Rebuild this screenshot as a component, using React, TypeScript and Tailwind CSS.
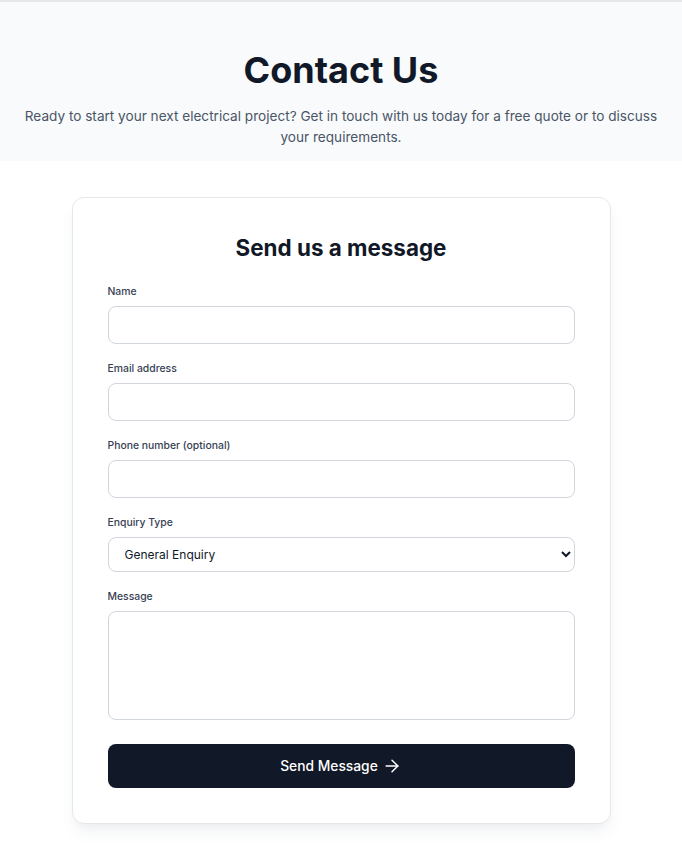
import React from 'react';
import { ArrowRight } from 'lucide-react';

const fields = [
  { id: 'name', label: 'Name', type: 'text' },
  { id: 'email', label: 'Email address', type: 'email' },
  { id: 'phone', label: 'Phone number (optional)', type: 'tel' },
];

const App: React.FC = () => {
  return (
    <div className="min-h-screen bg-white font-['Inter','Liberation_Sans',sans-serif] text-gray-900">
      <div className="border-t-2 border-gray-200 bg-[#f8fafc] px-4 pt-[48px] pb-[13px] text-center">
        <h1 className="text-4xl font-bold text-[#111827]">Contact Us</h1>
        <p className="mt-4 text-[13.6px] leading-[21px] text-gray-600">
          Ready to start your next electrical project? Get in touch with us today for a free quote or to discuss
          your requirements.
        </p>
      </div>

      <div className="px-4 pt-[36px] pb-10">
        <div className="mx-auto max-w-[539px] rounded-xl border border-gray-200 bg-white p-[35px] shadow-lg shadow-gray-200/60">
          <h2 className="mb-[21px] text-center text-[22.4px] leading-[30px] font-bold text-[#111827]">
            Send us a message
          </h2>
          <form className="flex flex-col gap-[17px]" onSubmit={(e) => e.preventDefault()}>
            {fields.map((f) => (
              <div key={f.id}>
                <label htmlFor={f.id} className="mb-1.5 block text-[10.4px] leading-4 font-medium text-gray-700">
                  {f.label}
                </label>
                <input
                  id={f.id}
                  type={f.type}
                  className="block h-[38px] w-full rounded-lg border border-gray-300 px-4 text-xs"
                />
              </div>
            ))}
            <div>
              <label htmlFor="type" className="mb-1.5 block text-[10.4px] leading-4 font-medium text-gray-700">
                Enquiry Type
              </label>
              <select
                id="type"
                className="block h-[35px] w-full rounded-lg border border-gray-300 bg-white pl-3 pr-2 text-xs text-gray-900"
              >
                <option>General Enquiry</option>
                <option>Quote Request</option>
                <option>Emergency</option>
              </select>
            </div>
            <div>
              <label htmlFor="message" className="mb-1.5 block text-[10.4px] leading-4 font-medium text-gray-700">
                Message
              </label>
              <textarea
                id="message"
                className="block h-[109px] w-full resize-none rounded-lg border border-gray-300 px-4 py-2 text-xs"
              />
            </div>
            <button
              type="submit"
              className="mt-[7px] flex h-11 w-full items-center justify-center gap-1 rounded-lg bg-[#111827] text-[13.8px] font-medium text-white"
            >
              Send Message
              <ArrowRight size={20} strokeWidth={1.75} />
            </button>
          </form>
        </div>
      </div>
    </div>
  );
};

export default App;
